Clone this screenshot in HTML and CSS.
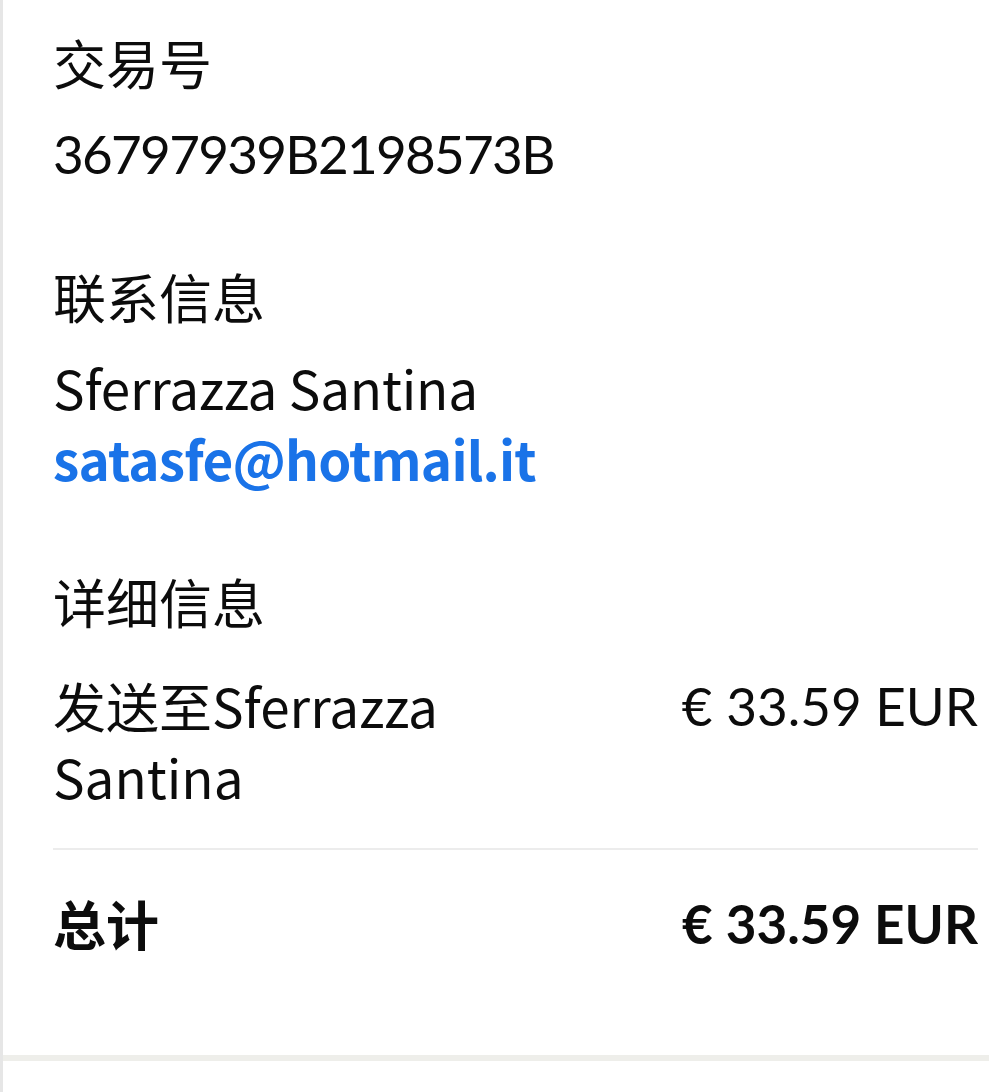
FILE: index.html
```html
<!DOCTYPE html>
<html lang="zh-CN">
<head>
<meta charset="utf-8">
<link rel="stylesheet" href="styles.css">
</head>
<body>
<div class="panel">
  <div class="content">
    <section class="block first">
      <div class="label">交易号</div>
      <div class="value num">36797939B2198573B</div>
    </section>
    <section class="block">
      <div class="label">联系信息</div>
      <div class="value name">Sferrazza Santina</div>
      <div class="email">satasfe@hotmail.it</div>
    </section>
    <section class="block">
      <div class="label">详细信息</div>
      <div class="row item">
        <div class="desc">发送至Sferrazza Santina</div>
        <div class="amount">€ 33.59 EUR</div>
      </div>
      <div class="divider"></div>
      <div class="row total">
        <div class="desc">总计</div>
        <div class="amount">€ 33.59 EUR</div>
      </div>
    </section>
  </div>
  <div class="band"></div>
  <div class="after"></div>
</div>
</body>
</html>
```

FILE: styles.css
```css
html, body {
  margin: 0;
  padding: 0;
  background: #ffffff;
}
body {
  font-family: "Noto Sans CJK SC", "Noto Sans", sans-serif;
  color: #0c0c0c;
  font-size: 53px;
  line-height: 71px;
}
.panel {
  border-left: 3px solid #e6e6e6;
  min-height: 1092px;
  box-sizing: border-box;
}
.content {
  padding: 27px 11px 96px 50px;
}
.block {
  margin-top: 72px;
}
.block.first {
  margin-top: 0;
}
.label {
  margin-bottom: 20px;
}
.num, .amount {
  font-family: "Lato", "Liberation Sans", sans-serif;
}
.num {
  letter-spacing: -1.7px;
}
.name {
  letter-spacing: -0.2px;
}
.email {
  color: #1a73e8;
  font-weight: 700;
  letter-spacing: -0.8px;
}
.row {
  display: flex;
  justify-content: space-between;
  align-items: flex-start;
}
.item {
  margin-top: 33px;
}
.item .desc {
  width: 400px;
}
.amount {
  white-space: nowrap;
}
.divider {
  height: 2px;
  background: #ececec;
  margin-top: 36px;
}
.total {
  margin-top: 38px;
  font-weight: 700;
}
.band {
  height: 6px;
  background: #eeeeea;
}
.after {
  height: 34px;
}
```
